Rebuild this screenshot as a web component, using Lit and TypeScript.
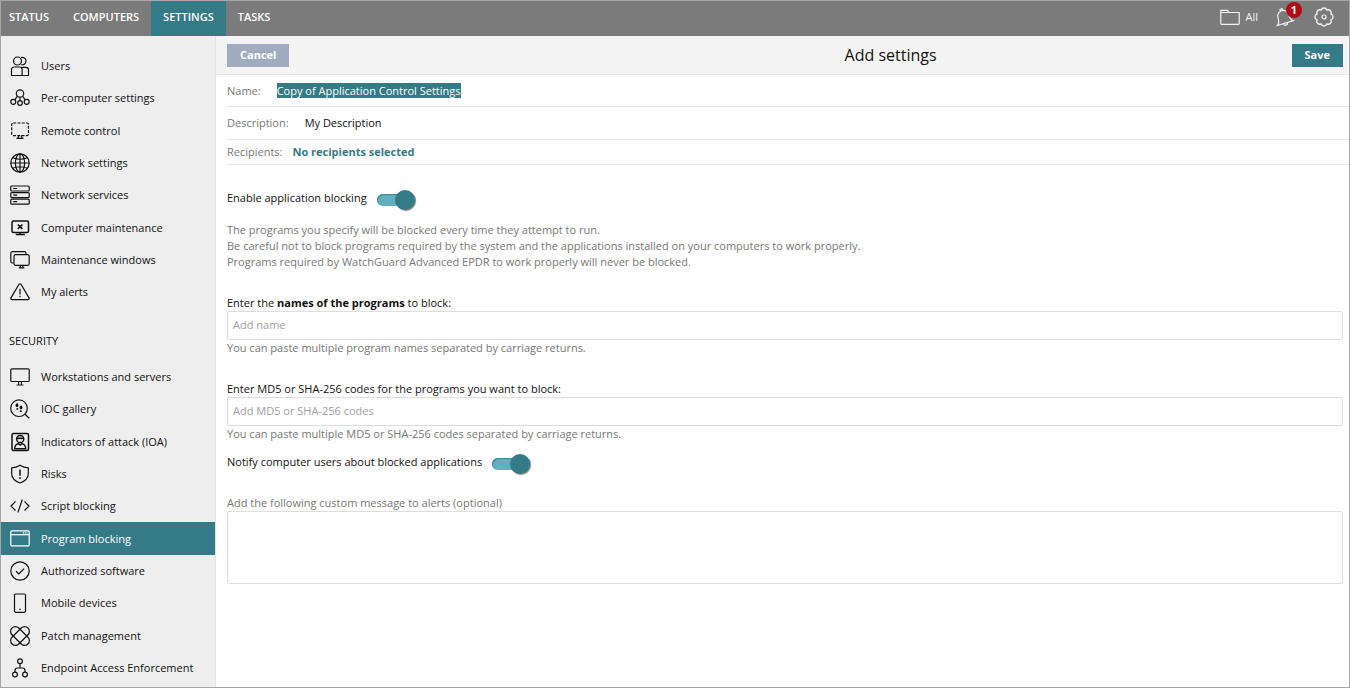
import { LitElement, html, css, svg } from "lit";
import type { TemplateResult } from "lit";
import { customElement, property, state } from "lit/decorators.js";
import { classMap } from "lit/directives/class-map.js";

const glyphs: Record<string, TemplateResult> = {
  users: svg`<circle cx="7.5" cy="5" r="4"/><path d="M11 1.6a3.7 3.7 0 1 1 .3 7M1.5 19.5v-6a2.6 2.6 0 0 1 2.6-2.5h5.4a2.6 2.6 0 0 1 2.6 2.5v6zM12.1 19.5h6.4v-5.5a2.6 2.6 0 0 0-2.6-2.6h-4.6"/>`,
  people: svg`<circle cx="10" cy="5.5" r="3.7"/><circle cx="3.3" cy="13.8" r="2.5"/><circle cx="10" cy="15" r="2.3"/><circle cx="16.7" cy="13.8" r="2.5"/><path d="M7.3 8.3l-2.4 3.3M12.7 8.3l2.4 3.3M10 9.2v3.5"/>`,
  remote: svg`<rect x="1.7" y="2" width="16.8" height="12.6" rx="1.5" stroke-dasharray="3 1.3"/><path d="M8.7 14.6l-.6 2.6M11.3 14.6l.6 2.6M6.5 17.4h7"/>`,
  globe: svg`<circle cx="10" cy="10" r="9.2"/><ellipse cx="10" cy="10" rx="4.6" ry="9.2"/><path d="M.8 10h18.4M2.8 4.8c4.4 1.8 10 1.8 14.4 0M2.8 15.2c4.4-1.8 10-1.8 14.4 0M10 .8v18.4"/>`,
  servers: svg`<rect x=".8" y="1" width="18.4" height="5" rx="1"/><rect x=".8" y="7.6" width="18.4" height="5" rx="1"/><rect x=".8" y="14.2" width="18.4" height="5" rx="1"/><path d="M3.2 3.5h4M3.2 10.1h4M3.2 16.7h4"/>`,
  fix: svg`<rect x="2" y="3" width="16.5" height="11.4" rx="1.5" stroke-width="1.5"/><path d="M10 14.5v1.8M5.8 16.6h9" stroke-width="1.5"/><path d="M7.8 6.5l4.6 4.4M12.4 6.5l-4.6 4.4" stroke-width="1.6"/>`,
  screens: svg`<path d="M3.6 13H2.3A1.5 1.5 0 0 1 .8 11.5V3.2A1.5 1.5 0 0 1 2.3 1.7H14.5A1.5 1.5 0 0 1 16 3.2V4.5"/><rect x="4" y="4.7" width="15.2" height="10.6" rx="1.5"/><path d="M10.3 15.5v2.2M12.9 15.5v2.2M8.8 17.8h5.6"/>`,
  alert: svg`<path d="M9 2.3a1.2 1.2 0 0 1 2 0l8 13.6a1.2 1.2 0 0 1-1 1.8H2a1.2 1.2 0 0 1-1-1.8z"/><path d="M10 6.8v5.6M10 13.7v1.5"/>`,
  monitor: svg`<rect x=".8" y="1.8" width="18.4" height="12.7" rx="1"/><path d="M8.6 14.5v3.5M11.4 14.5v3.5M6.6 18h6.8"/>`,
  ioc: svg`<circle cx="9" cy="9.2" r="8.3"/><path d="M15 15.3l4.3 4"/><g fill="currentColor" stroke="none"><ellipse cx="7" cy="6.3" rx="1.4" ry="2"/><ellipse cx="7.3" cy="9.9" rx="1" ry=".9"/><ellipse cx="11" cy="8.6" rx="1.4" ry="2"/><ellipse cx="10.8" cy="12.2" rx="1" ry=".9"/></g>`,
  ioa: svg`<rect x="2" y="1.5" width="16.5" height="17" rx="1.5" stroke-width="1.5"/><circle cx="10.2" cy="7" r="3.6" stroke-width="1.5"/><path d="M7 6.2h6.4M8.8 7.8v.1M11.6 7.8v.1M4.700 16.800c0-3 1.200-4.500 3.500-5.200l2 1.500 2-1.500c2.300.7 3.500 2.200 3.500 5.200z" stroke-width="1.4"/>`,
  shield: svg`<path d="M10 1.3c2.4 1.6 5 2.4 8.300 2.500v6c0 4.500-3 7.300-8.300 9.200-5.300-1.900-8.300-4.700-8.300-9.200v-6C5 3.700 7.600 2.900 10 1.300z"/><path d="M10 5.5v6.300M10 13.300v1.700" stroke-width="1.5"/>`,
  code: svg`<path d="M5.5 5.500L1 10l4.500 4.500M14.500 5.500L19 10l-4.500 4.500M12.300 3.500L7.900 16.500"/>`,
  window: svg`<rect x=".8" y="1.8" width="18.4" height="15" rx="1"/><path d="M.8 5.7h18.4"/><path d="M13 3.8h4.5" stroke-dasharray="1 .7"/>`,
  check: svg`<circle cx="10" cy="10" r="9.2"/><path d="M6 10.3l2.8 2.7 5.3-5.3"/>`,
  phone: svg`<rect x="4.5" y="1" width="11" height="18.3" rx="1.2"/><path d="M9.3 16.4h1.4"/>`,
  patch: svg`<rect x="5.2" y="-1.3" width="9.6" height="22.6" rx="4.8" transform="rotate(45 10 10)"/><rect x="5.2" y="-1.3" width="9.6" height="22.6" rx="4.8" transform="rotate(-45 10 10)"/>`,
  tree: svg`<circle cx="10" cy="3.2" r="2.4"/><circle cx="5" cy="16.5" r="2.4"/><circle cx="15" cy="16.5" r="2.4"/><path d="M10 5.6v4.2M5 14.1v-1.6c0-1.6.9-2.5 2.4-2.5h5.2c1.5 0 2.4.9 2.4 2.5v1.6"/>`,
  folder: svg`<path d="M.8 16.5V3.3h6.7l1.5 2.2h10.2v11a.8.8 0 0 1-.8.8H1.600a.8.8 0 0 1-.8-.8zM.8 5.500H9"/>`,
  bell: svg`<g transform="translate(-2 0) rotate(-17 10 10)"><path d="M1.3 16.2c1.900-1.400 2.700-3 2.700-6.600 0-3.700 2.200-6.300 5.500-6.300s5.500 2.600 5.500 6.300c0 3.600.8 5.200 2.700 6.600zM8.300 3.400V1.600h2.400v1.800M7.300 16.500a2.300 2.300 0 0 0 4.500 0"/></g>`,
  gear: svg`<path d="M17 7.100A3.100 3.100 0 0 1 17 12.900A3.100 3.100 0 0 1 12.900 17A3.100 3.100 0 0 1 7.100 17A3.100 3.100 0 0 1 3 12.900A3.100 3.100 0 0 1 3 7.100A3.100 3.100 0 0 1 7.100 3A3.100 3.100 0 0 1 12.900 3A3.100 3.100 0 0 1 17 7.100z" stroke-width="1.400"/><circle cx="10" cy="10" r="2"/>`,
};

@customElement("ui-icon")
export class UiIcon extends LitElement {
  @property() name = "";

  static styles = css`
    :host { display: block; width: 20px; height: 20px; flex: none; }
    .glyph { display: block; width: 100%; height: 100%; overflow: visible; fill: none; stroke: currentColor; stroke-width: 1.2; }
  `;

  render() {
    return html`<svg class="glyph" viewBox="0 0 20 20" aria-hidden="true">${glyphs[this.name]}</svg>`;
  }
}

interface NavItem { icon: string; label: string; active?: boolean; }

const general: NavItem[] = [
  { icon: "users", label: "Users" },
  { icon: "people", label: "Per-computer settings" },
  { icon: "remote", label: "Remote control" },
  { icon: "globe", label: "Network settings" },
  { icon: "servers", label: "Network services" },
  { icon: "fix", label: "Computer maintenance" },
  { icon: "screens", label: "Maintenance windows" },
  { icon: "alert", label: "My alerts" },
];

const security: NavItem[] = [
  { icon: "monitor", label: "Workstations and servers" },
  { icon: "ioc", label: "IOC gallery" },
  { icon: "ioa", label: "Indicators of attack (IOA)" },
  { icon: "shield", label: "Risks" },
  { icon: "code", label: "Script blocking" },
  { icon: "window", label: "Program blocking", active: true },
  { icon: "check", label: "Authorized software" },
  { icon: "phone", label: "Mobile devices" },
  { icon: "patch", label: "Patch management" },
  { icon: "tree", label: "Endpoint Access Enforcement" },
];

@customElement("app-root")
export class AppRoot extends LitElement {
  @state() private tab = "Settings";

  static styles = css`
    :host {
      display: block;
      font: 11px/16px "Open Sans", "Noto Sans", sans-serif;
      color: #111;
    }
    * { box-sizing: border-box; }
    a { color: inherit; text-decoration: none; }
    input, textarea, button { font: inherit; }
    .frame {
      display: grid;
      grid-template: auto 1fr / 215px minmax(0, 1fr);
      min-height: 100vh;
      border: 1px solid #a6a6a6;
      background: #fff;
    }
    .topbar {
      grid-column: 1 / -1;
      display: flex;
      justify-content: space-between;
      height: 35px;
      background: #7b7b7b;
      color: #fff;
    }
    .tabs { display: flex; }
    .tab {
      display: flex;
      align-items: center;
      padding: 0 12px 4px;
      font-weight: 600;
      text-transform: uppercase;
    }
    .tab:first-child { padding-left: 8px; }
    .tab.on { background: #347b87; }
    .tools { display: flex; align-items: center; padding: 0 15px 3px 0; color: #f2f2f2; }
    .tool {
      display: flex;
      align-items: center;
      gap: 5px;
      padding: 0;
      border: 0;
      background: none;
      color: inherit;
      position: relative;
    }
    .tool + .tool { margin-left: 18px; }
    .count {
      position: absolute;
      left: 10px;
      top: -5px;
      width: 16px;
      height: 16px;
      border-radius: 8px;
      background: #b30b12;
      color: #fff;
      font-weight: 700;
      text-align: center;
    }
    .side { background: #eee; border-right: 1px solid #e2e2e2; padding-top: 14px; }
    .list { list-style: none; margin: 0; padding: 0; }
    .item { display: flex; height: 32px; }
    .item:nth-child(3n) { height: 33px; }
    .link { flex: 1; display: flex; align-items: center; gap: 11px; padding-left: 9px; }
    .link.on { background: #347b87; color: #fff; }
    .group { margin: 0; padding: 25px 8px 12px; font: inherit; text-transform: uppercase; }
    .bar {
      display: grid;
      grid-template-columns: 3fr auto 2fr;
      align-items: center;
      height: 39px;
      padding: 0 6px 0 11px;
      background: #f4f4f4;
      border-bottom: 1px solid #e4e4e4;
    }
    .title { margin: 0; padding-left: 8px; font-size: 16px; line-height: 24px; font-weight: 400; }
    .btn { height: 23px; padding: 0 13px; border: 0; font-weight: 700; color: #fff; }
    .cancel { justify-self: start; background: #a1adbf; }
    .save { justify-self: end; background: #347b87; }
    .meta { padding-left: 11px; }
    .row { display: flex; align-items: center; height: 32px; border-bottom: 1px solid #e6e6e6; }
    .row.desc { height: 33px; }
    .row.short { height: 25px; }
    .key { color: #777; margin-right: 16px; }
    .short .key { margin-right: 10px; }
    .plain { border: 0; padding: 0; margin: 0; outline: 0; height: 15px; background: none; color: #111; field-sizing: content; }
    .picked { background: #347b87; color: #fff; }
    .strong { color: #347b87; font-weight: 700; }
    .form { padding: 21px 6px 20px 11px; }
    .line { display: flex; align-items: center; gap: 10px; height: 24px; }
    .switch {
      appearance: none;
      display: flex;
      align-items: center;
      position: relative;
      width: 39px;
      height: 22px;
      margin: 4px 0 0;
    }
    .switch::before {
      content: "";
      flex: 1;
      height: 12px;
      border-radius: 6px;
      background: #62afbf;
      box-shadow: inset 1px 1px 1px #3f8895;
    }
    .switch::after {
      content: "";
      position: absolute;
      right: 1px;
      top: 1px;
      width: 20px;
      height: 20px;
      border-radius: 50%;
      background: #347b87;
      box-shadow: 1px 1px 1px #888;
    }
    .switch:not(:checked)::after { right: auto; left: 0; }
    .hint { margin: 0; color: #777; }
    .intro { margin: 12px 0 25px; }
    .field { display: block; }
    .box {
      display: block;
      width: 100%;
      height: 29px;
      padding: 0 5px 2px;
      border: 1px solid #ddd;
      border-radius: 2px;
      background: #fff;
      outline: 0;
    }
    .box::placeholder { color: #a0a0a0; opacity: 1; }
    .after { margin-bottom: 25px; }
    .after.tight { margin-bottom: 8px; }
    .area { height: 73px; resize: none; }
    .optional { margin-top: 21px; color: #777; }
  `;

  private nav(items: NavItem[]) {
    return html`<ul class="list">
      ${items.map((i) => html`<li class="item">
        <a class=${classMap({ link: true, on: !!i.active })} href="#"><ui-icon name=${i.icon}></ui-icon>${i.label}</a>
      </li>`)}
    </ul>`;
  }

  render() {
    return html`<div class="frame">
      <header class="topbar">
        <nav class="tabs">
          ${["Status", "Computers", "Settings", "Tasks"].map((t) => html`<a
            class=${classMap({ tab: true, on: t === this.tab })} href="#" @click=${() => (this.tab = t)}>${t}</a>`)}
        </nav>
        <div class="tools">
          <button class="tool"><ui-icon name="folder"></ui-icon>All</button>
          <button class="tool" aria-label="Notifications"><ui-icon name="bell"></ui-icon><span class="count">1</span></button>
          <button class="tool" aria-label="Preferences"><ui-icon name="gear"></ui-icon></button>
        </div>
      </header>
      <aside class="side">
        ${this.nav(general)}
        <h2 class="group">Security</h2>
        ${this.nav(security)}
      </aside>
      <main>
        <div class="bar">
          <button class="btn cancel">Cancel</button>
          <h1 class="title">Add settings</h1>
          <button class="btn save">Save</button>
        </div>
        <div class="meta">
          <div class="row"><label class="key" for="name">Name:</label><input class="plain picked" id="name" value="Copy of Application Control Settings"></div>
          <div class="row desc"><label class="key" for="desc">Description:</label><input class="plain" id="desc" value="My Description"></div>
          <div class="row short"><span class="key">Recipients:</span><a class="strong" href="#">No recipients selected</a></div>
        </div>
        <div class="form">
          <div class="line"><label for="enable">Enable application blocking</label><input class="switch" id="enable" type="checkbox" role="switch" checked></div>
          <p class="hint intro">The programs you specify will be blocked every time they attempt to run.<br>Be careful not to block programs required by the system and the applications installed on your computers to work properly.<br>Programs required by WatchGuard Advanced EPDR to work properly will never be blocked.</p>
          <label class="field" for="names">Enter the <b>names of the programs</b> to block:</label>
          <input class="box" id="names" placeholder="Add name">
          <p class="hint after">You can paste multiple program names separated by carriage returns.</p>
          <label class="field" for="codes">Enter MD5 or SHA-256 codes for the programs you want to block:</label>
          <input class="box" id="codes" placeholder="Add MD5 or SHA-256 codes">
          <p class="hint after tight">You can paste multiple MD5 or SHA-256 codes separated by carriage returns.</p>
          <div class="line"><label for="notify">Notify computer users about blocked applications</label><input class="switch" id="notify" type="checkbox" role="switch" checked></div>
          <label class="field optional" for="message">Add the following custom message to alerts (optional)</label>
          <textarea class="box area" id="message"></textarea>
        </div>
      </main>
    </div>`;
  }
}
